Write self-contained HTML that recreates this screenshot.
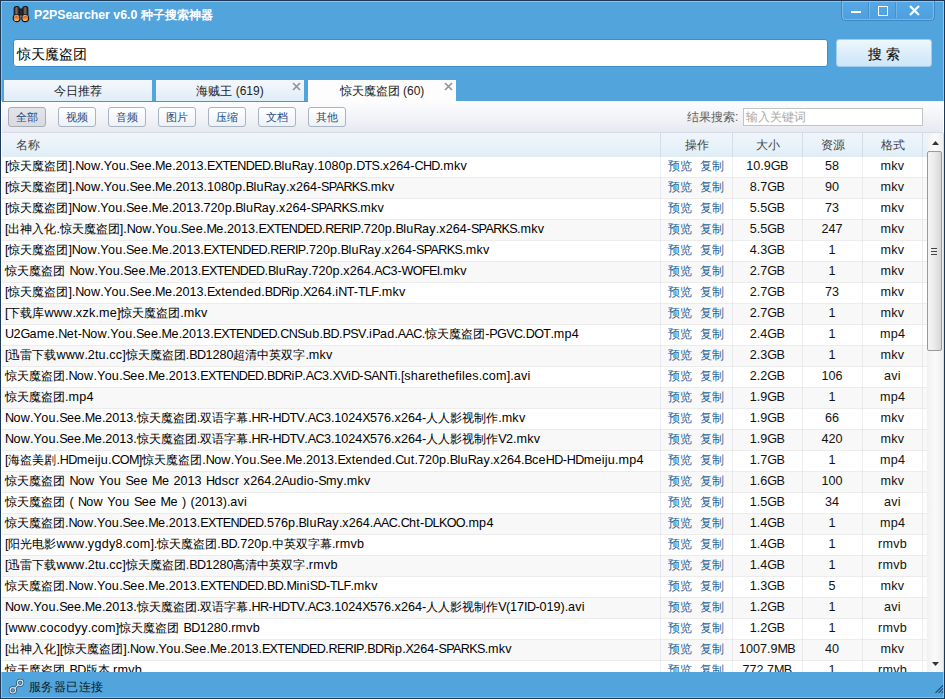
<!DOCTYPE html>
<html><head><meta charset="utf-8">
<style>
*{box-sizing:border-box;margin:0;padding:0}
html,body{width:945px;height:699px;overflow:hidden;background:#52a4dc;font-family:"Liberation Sans",sans-serif;font-size:12px;color:#111}
.abs{position:absolute}
#win{position:absolute;left:0;top:0;width:945px;height:699px;background:#52a4dc;border:1px solid #1c3a58;}
#inner{position:absolute;left:0;top:0;width:943px;height:100px;border:1px solid #8cc6f0;border-bottom:none}
#title{position:absolute;left:34px;top:7px;color:#fff;font-weight:bold;font-size:12.3px;line-height:16px;letter-spacing:0}
#ctrl{position:absolute;left:841px;top:0;width:94px;height:21px;border:1px solid #3f88c4;border-top:none;border-radius:0 0 5px 5px;background:linear-gradient(#58a8e6,#4e9fdd);box-shadow:inset 1px 0 0 rgba(255,255,255,.25),inset -1px 0 0 rgba(255,255,255,.25),inset 0 -1px 0 rgba(255,255,255,.25)}
#ctrl .sep{position:absolute;top:1px;bottom:2px;width:1px;background:#4690cc;box-shadow:1px 0 0 rgba(255,255,255,.2)}
#search{position:absolute;left:13px;top:39px;width:815px;height:28px;background:#fff;border-radius:3px;border:1px solid #3d8ccc;font-size:14px;line-height:29px;padding-left:3px;color:#000}
#sbtn{position:absolute;left:836px;top:39px;width:96px;height:28px;border-radius:3px;background:linear-gradient(#eef7fd,#d8ecfa 60%,#cfe6f8);border:1px solid #9fcdf0;font-size:14px;line-height:28px;text-align:center;color:#111;letter-spacing:0;-webkit-text-stroke:0.12px #111}
.tab{position:absolute;top:80px;height:21px;width:148px;background:linear-gradient(#f4f8fc,#e4eef8 85%,#dcf2fc);text-align:center;line-height:22.5px;font-size:12px;color:#222}
.tab.act{background:#fdfdfd;height:22px}
.tab .x{position:absolute;right:3px;top:2px;width:9px;height:9px}
#panel{position:absolute;left:2px;top:101px;width:941px;height:571px;background:#fff}
#tool{position:absolute;left:0;top:0;width:941px;height:32px;background:linear-gradient(#fdfdfe,#f2f4f8 50%,#e6e9f0);border-bottom:1px solid #d6dbe4}
.fb{position:absolute;top:6px;width:38px;height:20px;border:1px solid #a9b4c2;border-radius:3px;background:linear-gradient(#ffffff,#edf1f6);color:#1f4a7c;font-size:10.5px;line-height:19.5px;text-align:center}
.fb.on{background:linear-gradient(#e2e4e8,#d8dbe0);border-color:#a4adb8}
#lbl{position:absolute;left:685px;top:7px;color:#606060;font-size:12px;line-height:18px}
#kw{position:absolute;left:741px;top:7px;width:180px;height:18px;border:1px solid #c3c3c3;background:#fff;color:#aaa;font-size:12px;line-height:16px;padding-left:2px}
#hdr{position:absolute;left:0;top:32px;width:925px;height:24px;background:linear-gradient(#f0f4fc,#e8f2f9 55%,#e0edf6);color:#444;font-size:12px;line-height:22px}
#hdr span{position:absolute;top:1px;text-align:center}
#hdr .vs{position:absolute;top:0;width:1px;height:24px;background:#d2dde8}
#rows{position:absolute;left:0;top:56px;width:925px;height:515px;overflow:hidden}
.r{position:absolute;left:0;width:925px;height:21px;background:#fff;border-bottom:1px solid #ececec;line-height:18px;font-size:12.6px;white-space:nowrap}
.r.alt{background:#f8f8f8}
.r span{position:absolute;top:0}
.r .n{left:3px;color:#000}
.r .op{left:666px;color:#2c6699;font-size:12px}
.r .op i{font-style:normal}
.r b{font-weight:normal;line-height:0}.r b.u{letter-spacing:-0.66px}.r b.l{letter-spacing:0.24px}.r b.d{letter-spacing:0}.r b.p{letter-spacing:-0.08px}.r b.c{font-size:12px}.r b.s{letter-spacing:0.88px}
.r .op .c2{margin-left:8px}
.r .sz{left:730px;width:70px;text-align:center}
.r .rs{left:800px;width:60px;text-align:center}
.r .fm{left:860.5px;width:60px;text-align:center}
.vl{position:absolute;top:0;width:1px;height:515px;background:rgba(200,205,215,.35)}
#sb{position:absolute;left:925px;top:32px;width:16px;height:539px;background:linear-gradient(90deg,#f0f0f0,#fafafa 50%,#eeeeee)}
#thumb{position:absolute;left:0px;top:18px;width:15px;height:200px;border:1px solid #999;border-radius:2px;background:linear-gradient(90deg,#f4f4f4,#ececec 45%,#d6d6d6)}
#status{position:absolute;left:1px;top:672px;width:943px;height:26px;background:#52a4dc;border-left:1px solid #8cc6f0;border-right:1px solid #8cc6f0;border-bottom:1px solid #7fbdea}
#stxt{position:absolute;left:27px;top:7.5px;font-size:12.3px;letter-spacing:0.45px;line-height:14px;color:#0a1828}
</style></head><body>
<div id="win">
<div id="inner"></div>
</div>
<!-- binoculars -->
<svg class="abs" style="left:12px;top:5px" width="18" height="18" viewBox="0 0 18 18">
<defs>
<linearGradient id="lg" x1="0" y1="0" x2="0" y2="1"><stop offset="0" stop-color="#c8401c"/><stop offset=".55" stop-color="#ee8a3a"/><stop offset="1" stop-color="#ffd080"/></linearGradient>
<linearGradient id="bg" x1="0" y1="0" x2="1" y2="0"><stop offset="0" stop-color="#3a302c"/><stop offset=".45" stop-color="#7a6a5e"/><stop offset="1" stop-color="#2e2622"/></linearGradient>
</defs>
<path d="M6 4H12V10H6Z" fill="#2a2a30" stroke="#101018" stroke-width="1"/>
<rect x="2.2" y="1.5" width="5" height="11" rx="2.2" fill="url(#bg)" stroke="#141418" stroke-width="1.1"/>
<rect x="10.8" y="1.5" width="5" height="11" rx="2.2" fill="url(#bg)" stroke="#141418" stroke-width="1.1"/>
<circle cx="4.6" cy="13.2" r="3.4" fill="url(#lg)" stroke="#121216" stroke-width="1.1"/>
<circle cx="13.2" cy="13.2" r="3.4" fill="url(#lg)" stroke="#121216" stroke-width="1.1"/>
<path d="M2 11.2Q4.6 9.6 7.2 11.2M10.6 11.2Q13.2 9.6 15.8 11.2" stroke="#e8e0d0" stroke-width=".8" fill="none"/>
</svg>
<div id="title">P2PSearcher v6.0 <span style="font-size:12px">种子搜索神器</span></div>
<div id="ctrl">
<div class="sep" style="left:26px"></div>
<div class="sep" style="left:53px"></div>
<div class="abs" style="left:0;top:1px;width:92px;height:1px;background:#8cc6f0"></div>
<div class="abs" style="left:9px;top:11px;width:10px;height:2px;background:#fff"></div>
<div class="abs" style="left:36px;top:6px;width:10px;height:10px;border:1.7px solid #fff"></div>
<svg class="abs" style="left:67px;top:5px" width="11" height="11" viewBox="0 0 11 11"><path d="M1 1L10 10M10 1L1 10" stroke="#fff" stroke-width="2.2"/></svg>
</div>
<div class="abs" style="left:0;top:0;width:945px;height:1px;background:#1c3a58"></div>
<div id="search">惊天魔盗团</div>
<div id="sbtn">搜 索</div>
<div class="tab" style="left:4px">今日推荐</div>
<div class="tab" style="left:156px">海贼王 (619)<svg class="x" viewBox="0 0 9 9"><path d="M1 1L8 8M8 1L1 8" stroke="#8a939c" stroke-width="1.6"/></svg></div>
<div class="tab act" style="left:308px">惊天魔盗团 (60)<svg class="x" viewBox="0 0 9 9"><path d="M1 1L8 8M8 1L1 8" stroke="#8a939c" stroke-width="1.6"/></svg></div>
<div class="abs" style="left:2px;top:101px;width:306px;height:1px;background:#5c8fb3;z-index:5"></div>
<div class="abs" style="left:1px;top:101px;width:943px;height:571px;background:#fff"></div>
<div id="panel">
<div id="tool">
<div class="fb on" style="left:6px">全部</div>
<div class="fb" style="left:56px">视频</div>
<div class="fb" style="left:106px">音频</div>
<div class="fb" style="left:156px">图片</div>
<div class="fb" style="left:206px">压缩</div>
<div class="fb" style="left:256px">文档</div>
<div class="fb" style="left:306px">其他</div>
<div id="lbl">结果搜索:</div>
<div id="kw">输入关键词</div>
</div>
<div id="hdr">
<span style="left:14px">名称</span>
<div class="vs" style="left:658px"></div>
<span style="left:659px;width:72px">操作</span>
<div class="vs" style="left:730px"></div>
<span style="left:731px;width:70px">大小</span>
<div class="vs" style="left:800px"></div>
<span style="left:801px;width:60px">资源</span>
<div class="vs" style="left:860px"></div>
<span style="left:861px;width:60px">格式</span>
<div class="vs" style="left:920px"></div>
</div>
<div id="rows">
<div class="r" style="top:0px"><span class="n"><b class="p">[</b><b class="c">惊天魔盗团</b><b class="p">].</b><b class="u">N</b><b class="l">ow</b><b class="p">.</b><b class="u">Y</b><b class="l">ou</b><b class="p">.</b><b class="u">S</b><b class="l">ee</b><b class="p">.</b><b class="u">M</b><b class="l">e</b><b class="p">.</b><b class="d">2013</b><b class="p">.</b><b class="u">EXTENDED</b><b class="p">.</b><b class="u">B</b><b class="l">lu</b><b class="u">R</b><b class="l">ay</b><b class="p">.</b><b class="d">1080</b><b class="l">p</b><b class="p">.</b><b class="u">DTS</b><b class="p">.</b><b class="l">x</b><b class="d">264</b><b class="p">-</b><b class="u">CHD</b><b class="p">.</b><b class="l">mkv</b></span><span class="op"><i>预览</i><i class="c2">复制</i></span><span class="sz"><b class="d">10</b><b class="p">.</b><b class="d">9</b><b class="u">GB</b></span><span class="rs"><b class="d">58</b></span><span class="fm"><b class="l">mkv</b></span></div>
<div class="r alt" style="top:21px"><span class="n"><b class="p">[</b><b class="c">惊天魔盗团</b><b class="p">].</b><b class="u">N</b><b class="l">ow</b><b class="p">.</b><b class="u">Y</b><b class="l">ou</b><b class="p">.</b><b class="u">S</b><b class="l">ee</b><b class="p">.</b><b class="u">M</b><b class="l">e</b><b class="p">.</b><b class="d">2013</b><b class="p">.</b><b class="d">1080</b><b class="l">p</b><b class="p">.</b><b class="u">B</b><b class="l">lu</b><b class="u">R</b><b class="l">ay</b><b class="p">.</b><b class="l">x</b><b class="d">264</b><b class="p">-</b><b class="u">SPARKS</b><b class="p">.</b><b class="l">mkv</b></span><span class="op"><i>预览</i><i class="c2">复制</i></span><span class="sz"><b class="d">8</b><b class="p">.</b><b class="d">7</b><b class="u">GB</b></span><span class="rs"><b class="d">90</b></span><span class="fm"><b class="l">mkv</b></span></div>
<div class="r" style="top:42px"><span class="n"><b class="p">[</b><b class="c">惊天魔盗团</b><b class="p">]</b><b class="u">N</b><b class="l">ow</b><b class="p">.</b><b class="u">Y</b><b class="l">ou</b><b class="p">.</b><b class="u">S</b><b class="l">ee</b><b class="p">.</b><b class="u">M</b><b class="l">e</b><b class="p">.</b><b class="d">2013</b><b class="p">.</b><b class="d">720</b><b class="l">p</b><b class="p">.</b><b class="u">B</b><b class="l">lu</b><b class="u">R</b><b class="l">ay</b><b class="p">.</b><b class="l">x</b><b class="d">264</b><b class="p">-</b><b class="u">SPARKS</b><b class="p">.</b><b class="l">mkv</b></span><span class="op"><i>预览</i><i class="c2">复制</i></span><span class="sz"><b class="d">5</b><b class="p">.</b><b class="d">5</b><b class="u">GB</b></span><span class="rs"><b class="d">73</b></span><span class="fm"><b class="l">mkv</b></span></div>
<div class="r alt" style="top:63px"><span class="n"><b class="p">[</b><b class="c">出神入化</b><b class="p">.</b><b class="c">惊天魔盗团</b><b class="p">].</b><b class="u">N</b><b class="l">ow</b><b class="p">.</b><b class="u">Y</b><b class="l">ou</b><b class="p">.</b><b class="u">S</b><b class="l">ee</b><b class="p">.</b><b class="u">M</b><b class="l">e</b><b class="p">.</b><b class="d">2013</b><b class="p">.</b><b class="u">EXTENDED</b><b class="p">.</b><b class="u">RERIP</b><b class="p">.</b><b class="d">720</b><b class="l">p</b><b class="p">.</b><b class="u">B</b><b class="l">lu</b><b class="u">R</b><b class="l">ay</b><b class="p">.</b><b class="l">x</b><b class="d">264</b><b class="p">-</b><b class="u">SPARKS</b><b class="p">.</b><b class="l">mkv</b></span><span class="op"><i>预览</i><i class="c2">复制</i></span><span class="sz"><b class="d">5</b><b class="p">.</b><b class="d">5</b><b class="u">GB</b></span><span class="rs"><b class="d">247</b></span><span class="fm"><b class="l">mkv</b></span></div>
<div class="r" style="top:84px"><span class="n"><b class="p">[</b><b class="c">惊天魔盗团</b><b class="p">]</b><b class="u">N</b><b class="l">ow</b><b class="p">.</b><b class="u">Y</b><b class="l">ou</b><b class="p">.</b><b class="u">S</b><b class="l">ee</b><b class="p">.</b><b class="u">M</b><b class="l">e</b><b class="p">.</b><b class="d">2013</b><b class="p">.</b><b class="u">EXTENDED</b><b class="p">.</b><b class="u">RERIP</b><b class="p">.</b><b class="d">720</b><b class="l">p</b><b class="p">.</b><b class="u">B</b><b class="l">lu</b><b class="u">R</b><b class="l">ay</b><b class="p">.</b><b class="l">x</b><b class="d">264</b><b class="p">-</b><b class="u">SPARKS</b><b class="p">.</b><b class="l">mkv</b></span><span class="op"><i>预览</i><i class="c2">复制</i></span><span class="sz"><b class="d">4</b><b class="p">.</b><b class="d">3</b><b class="u">GB</b></span><span class="rs"><b class="d">1</b></span><span class="fm"><b class="l">mkv</b></span></div>
<div class="r alt" style="top:105px"><span class="n"><b class="c">惊天魔盗团</b><b class="s"> </b><b class="u">N</b><b class="l">ow</b><b class="p">.</b><b class="u">Y</b><b class="l">ou</b><b class="p">.</b><b class="u">S</b><b class="l">ee</b><b class="p">.</b><b class="u">M</b><b class="l">e</b><b class="p">.</b><b class="d">2013</b><b class="p">.</b><b class="u">EXTENDED</b><b class="p">.</b><b class="u">B</b><b class="l">lu</b><b class="u">R</b><b class="l">ay</b><b class="p">.</b><b class="d">720</b><b class="l">p</b><b class="p">.</b><b class="l">x</b><b class="d">264</b><b class="p">.</b><b class="u">AC</b><b class="d">3</b><b class="p">-</b><b class="u">WOFEI</b><b class="p">.</b><b class="l">mkv</b></span><span class="op"><i>预览</i><i class="c2">复制</i></span><span class="sz"><b class="d">2</b><b class="p">.</b><b class="d">7</b><b class="u">GB</b></span><span class="rs"><b class="d">1</b></span><span class="fm"><b class="l">mkv</b></span></div>
<div class="r" style="top:126px"><span class="n"><b class="p">[</b><b class="c">惊天魔盗团</b><b class="p">].</b><b class="u">N</b><b class="l">ow</b><b class="p">.</b><b class="u">Y</b><b class="l">ou</b><b class="p">.</b><b class="u">S</b><b class="l">ee</b><b class="p">.</b><b class="u">M</b><b class="l">e</b><b class="p">.</b><b class="d">2013</b><b class="p">.</b><b class="u">E</b><b class="l">xtended</b><b class="p">.</b><b class="u">BDR</b><b class="l">ip</b><b class="p">.</b><b class="u">X</b><b class="d">264</b><b class="p">.</b><b class="l">i</b><b class="u">NT</b><b class="p">-</b><b class="u">TLF</b><b class="p">.</b><b class="l">mkv</b></span><span class="op"><i>预览</i><i class="c2">复制</i></span><span class="sz"><b class="d">2</b><b class="p">.</b><b class="d">7</b><b class="u">GB</b></span><span class="rs"><b class="d">73</b></span><span class="fm"><b class="l">mkv</b></span></div>
<div class="r alt" style="top:147px"><span class="n"><b class="p">[</b><b class="c">下载库</b><b class="l">www</b><b class="p">.</b><b class="l">xzk</b><b class="p">.</b><b class="l">me</b><b class="p">]</b><b class="c">惊天魔盗团</b><b class="p">.</b><b class="l">mkv</b></span><span class="op"><i>预览</i><i class="c2">复制</i></span><span class="sz"><b class="d">2</b><b class="p">.</b><b class="d">7</b><b class="u">GB</b></span><span class="rs"><b class="d">1</b></span><span class="fm"><b class="l">mkv</b></span></div>
<div class="r" style="top:168px"><span class="n"><b class="u">U</b><b class="d">2</b><b class="u">G</b><b class="l">ame</b><b class="p">.</b><b class="u">N</b><b class="l">et</b><b class="p">-</b><b class="u">N</b><b class="l">ow</b><b class="p">.</b><b class="u">Y</b><b class="l">ou</b><b class="p">.</b><b class="u">S</b><b class="l">ee</b><b class="p">.</b><b class="u">M</b><b class="l">e</b><b class="p">.</b><b class="d">2013</b><b class="p">.</b><b class="u">EXTENDED</b><b class="p">.</b><b class="u">CNS</b><b class="l">ub</b><b class="p">.</b><b class="u">BD</b><b class="p">.</b><b class="u">PSV</b><b class="p">.</b><b class="l">i</b><b class="u">P</b><b class="l">ad</b><b class="p">.</b><b class="u">AAC</b><b class="p">.</b><b class="c">惊天魔盗团</b><b class="p">-</b><b class="u">PGVC</b><b class="p">.</b><b class="u">DOT</b><b class="p">.</b><b class="l">mp</b><b class="d">4</b></span><span class="op"><i>预览</i><i class="c2">复制</i></span><span class="sz"><b class="d">2</b><b class="p">.</b><b class="d">4</b><b class="u">GB</b></span><span class="rs"><b class="d">1</b></span><span class="fm"><b class="l">mp</b><b class="d">4</b></span></div>
<div class="r alt" style="top:189px"><span class="n"><b class="p">[</b><b class="c">迅雷下载</b><b class="l">www</b><b class="p">.</b><b class="d">2</b><b class="l">tu</b><b class="p">.</b><b class="l">cc</b><b class="p">]</b><b class="c">惊天魔盗团</b><b class="p">.</b><b class="u">BD</b><b class="d">1280</b><b class="c">超清中英双字</b><b class="p">.</b><b class="l">mkv</b></span><span class="op"><i>预览</i><i class="c2">复制</i></span><span class="sz"><b class="d">2</b><b class="p">.</b><b class="d">3</b><b class="u">GB</b></span><span class="rs"><b class="d">1</b></span><span class="fm"><b class="l">mkv</b></span></div>
<div class="r" style="top:210px"><span class="n"><b class="c">惊天魔盗团</b><b class="p">.</b><b class="u">N</b><b class="l">ow</b><b class="p">.</b><b class="u">Y</b><b class="l">ou</b><b class="p">.</b><b class="u">S</b><b class="l">ee</b><b class="p">.</b><b class="u">M</b><b class="l">e</b><b class="p">.</b><b class="d">2013</b><b class="p">.</b><b class="u">EXTENDED</b><b class="p">.</b><b class="u">BDR</b><b class="l">i</b><b class="u">P</b><b class="p">.</b><b class="u">AC</b><b class="d">3</b><b class="p">.</b><b class="u">XV</b><b class="l">i</b><b class="u">D</b><b class="p">-</b><b class="u">SANT</b><b class="l">i</b><b class="p">.[</b><b class="l">sharethefiles</b><b class="p">.</b><b class="l">com</b><b class="p">].</b><b class="l">avi</b></span><span class="op"><i>预览</i><i class="c2">复制</i></span><span class="sz"><b class="d">2</b><b class="p">.</b><b class="d">2</b><b class="u">GB</b></span><span class="rs"><b class="d">106</b></span><span class="fm"><b class="l">avi</b></span></div>
<div class="r alt" style="top:231px"><span class="n"><b class="c">惊天魔盗团</b><b class="p">.</b><b class="l">mp</b><b class="d">4</b></span><span class="op"><i>预览</i><i class="c2">复制</i></span><span class="sz"><b class="d">1</b><b class="p">.</b><b class="d">9</b><b class="u">GB</b></span><span class="rs"><b class="d">1</b></span><span class="fm"><b class="l">mp</b><b class="d">4</b></span></div>
<div class="r" style="top:252px"><span class="n"><b class="u">N</b><b class="l">ow</b><b class="p">.</b><b class="u">Y</b><b class="l">ou</b><b class="p">.</b><b class="u">S</b><b class="l">ee</b><b class="p">.</b><b class="u">M</b><b class="l">e</b><b class="p">.</b><b class="d">2013</b><b class="p">.</b><b class="c">惊天魔盗团</b><b class="p">.</b><b class="c">双语字幕</b><b class="p">.</b><b class="u">HR</b><b class="p">-</b><b class="u">HDTV</b><b class="p">.</b><b class="u">AC</b><b class="d">3</b><b class="p">.</b><b class="d">1024</b><b class="u">X</b><b class="d">576</b><b class="p">.</b><b class="l">x</b><b class="d">264</b><b class="p">-</b><b class="c">人人影视制作</b><b class="p">.</b><b class="l">mkv</b></span><span class="op"><i>预览</i><i class="c2">复制</i></span><span class="sz"><b class="d">1</b><b class="p">.</b><b class="d">9</b><b class="u">GB</b></span><span class="rs"><b class="d">66</b></span><span class="fm"><b class="l">mkv</b></span></div>
<div class="r alt" style="top:273px"><span class="n"><b class="u">N</b><b class="l">ow</b><b class="p">.</b><b class="u">Y</b><b class="l">ou</b><b class="p">.</b><b class="u">S</b><b class="l">ee</b><b class="p">.</b><b class="u">M</b><b class="l">e</b><b class="p">.</b><b class="d">2013</b><b class="p">.</b><b class="c">惊天魔盗团</b><b class="p">.</b><b class="c">双语字幕</b><b class="p">.</b><b class="u">HR</b><b class="p">-</b><b class="u">HDTV</b><b class="p">.</b><b class="u">AC</b><b class="d">3</b><b class="p">.</b><b class="d">1024</b><b class="u">X</b><b class="d">576</b><b class="p">.</b><b class="l">x</b><b class="d">264</b><b class="p">-</b><b class="c">人人影视制作</b><b class="u">V</b><b class="d">2</b><b class="p">.</b><b class="l">mkv</b></span><span class="op"><i>预览</i><i class="c2">复制</i></span><span class="sz"><b class="d">1</b><b class="p">.</b><b class="d">9</b><b class="u">GB</b></span><span class="rs"><b class="d">420</b></span><span class="fm"><b class="l">mkv</b></span></div>
<div class="r" style="top:294px"><span class="n"><b class="p">[</b><b class="c">海盗美剧</b><b class="p">.</b><b class="u">HD</b><b class="l">meiju</b><b class="p">.</b><b class="u">COM</b><b class="p">]</b><b class="c">惊天魔盗团</b><b class="p">.</b><b class="u">N</b><b class="l">ow</b><b class="p">.</b><b class="u">Y</b><b class="l">ou</b><b class="p">.</b><b class="u">S</b><b class="l">ee</b><b class="p">.</b><b class="u">M</b><b class="l">e</b><b class="p">.</b><b class="d">2013</b><b class="p">.</b><b class="u">E</b><b class="l">xtended</b><b class="p">.</b><b class="u">C</b><b class="l">ut</b><b class="p">.</b><b class="d">720</b><b class="l">p</b><b class="p">.</b><b class="u">B</b><b class="l">lu</b><b class="u">R</b><b class="l">ay</b><b class="p">.</b><b class="l">x</b><b class="d">264</b><b class="p">.</b><b class="u">B</b><b class="l">ce</b><b class="u">HD</b><b class="p">-</b><b class="u">HD</b><b class="l">meiju</b><b class="p">.</b><b class="l">mp</b><b class="d">4</b></span><span class="op"><i>预览</i><i class="c2">复制</i></span><span class="sz"><b class="d">1</b><b class="p">.</b><b class="d">7</b><b class="u">GB</b></span><span class="rs"><b class="d">1</b></span><span class="fm"><b class="l">mp</b><b class="d">4</b></span></div>
<div class="r alt" style="top:315px"><span class="n"><b class="c">惊天魔盗团</b><b class="s"> </b><b class="u">N</b><b class="l">ow</b><b class="s"> </b><b class="u">Y</b><b class="l">ou</b><b class="s"> </b><b class="u">S</b><b class="l">ee</b><b class="s"> </b><b class="u">M</b><b class="l">e</b><b class="s"> </b><b class="d">2013</b><b class="s"> </b><b class="u">H</b><b class="l">dscr</b><b class="s"> </b><b class="l">x</b><b class="d">264</b><b class="p">.</b><b class="d">2</b><b class="u">A</b><b class="l">udio</b><b class="p">-</b><b class="u">S</b><b class="l">my</b><b class="p">.</b><b class="l">mkv</b></span><span class="op"><i>预览</i><i class="c2">复制</i></span><span class="sz"><b class="d">1</b><b class="p">.</b><b class="d">6</b><b class="u">GB</b></span><span class="rs"><b class="d">100</b></span><span class="fm"><b class="l">mkv</b></span></div>
<div class="r" style="top:336px"><span class="n"><b class="c">惊天魔盗团</b><b class="s"> </b><b class="p">(</b><b class="s"> </b><b class="u">N</b><b class="l">ow</b><b class="s"> </b><b class="u">Y</b><b class="l">ou</b><b class="s"> </b><b class="u">S</b><b class="l">ee</b><b class="s"> </b><b class="u">M</b><b class="l">e</b><b class="s"> </b><b class="p">)</b><b class="s"> </b><b class="p">(</b><b class="d">2013</b><b class="p">).</b><b class="l">avi</b></span><span class="op"><i>预览</i><i class="c2">复制</i></span><span class="sz"><b class="d">1</b><b class="p">.</b><b class="d">5</b><b class="u">GB</b></span><span class="rs"><b class="d">34</b></span><span class="fm"><b class="l">avi</b></span></div>
<div class="r alt" style="top:357px"><span class="n"><b class="c">惊天魔盗团</b><b class="p">.</b><b class="u">N</b><b class="l">ow</b><b class="p">.</b><b class="u">Y</b><b class="l">ou</b><b class="p">.</b><b class="u">S</b><b class="l">ee</b><b class="p">.</b><b class="u">M</b><b class="l">e</b><b class="p">.</b><b class="d">2013</b><b class="p">.</b><b class="u">EXTENDED</b><b class="p">.</b><b class="d">576</b><b class="l">p</b><b class="p">.</b><b class="u">B</b><b class="l">lu</b><b class="u">R</b><b class="l">ay</b><b class="p">.</b><b class="l">x</b><b class="d">264</b><b class="p">.</b><b class="u">AAC</b><b class="p">.</b><b class="u">C</b><b class="l">ht</b><b class="p">-</b><b class="u">DLKOO</b><b class="p">.</b><b class="l">mp</b><b class="d">4</b></span><span class="op"><i>预览</i><i class="c2">复制</i></span><span class="sz"><b class="d">1</b><b class="p">.</b><b class="d">4</b><b class="u">GB</b></span><span class="rs"><b class="d">1</b></span><span class="fm"><b class="l">mp</b><b class="d">4</b></span></div>
<div class="r" style="top:378px"><span class="n"><b class="p">[</b><b class="c">阳光电影</b><b class="l">www</b><b class="p">.</b><b class="l">ygdy</b><b class="d">8</b><b class="p">.</b><b class="l">com</b><b class="p">].</b><b class="c">惊天魔盗团</b><b class="p">.</b><b class="u">BD</b><b class="p">.</b><b class="d">720</b><b class="l">p</b><b class="p">.</b><b class="c">中英双字幕</b><b class="p">.</b><b class="l">rmvb</b></span><span class="op"><i>预览</i><i class="c2">复制</i></span><span class="sz"><b class="d">1</b><b class="p">.</b><b class="d">4</b><b class="u">GB</b></span><span class="rs"><b class="d">1</b></span><span class="fm"><b class="l">rmvb</b></span></div>
<div class="r alt" style="top:399px"><span class="n"><b class="p">[</b><b class="c">迅雷下载</b><b class="l">www</b><b class="p">.</b><b class="d">2</b><b class="l">tu</b><b class="p">.</b><b class="l">cc</b><b class="p">]</b><b class="c">惊天魔盗团</b><b class="p">.</b><b class="u">BD</b><b class="d">1280</b><b class="c">高清中英双字</b><b class="p">.</b><b class="l">rmvb</b></span><span class="op"><i>预览</i><i class="c2">复制</i></span><span class="sz"><b class="d">1</b><b class="p">.</b><b class="d">4</b><b class="u">GB</b></span><span class="rs"><b class="d">1</b></span><span class="fm"><b class="l">rmvb</b></span></div>
<div class="r" style="top:420px"><span class="n"><b class="c">惊天魔盗团</b><b class="p">.</b><b class="u">N</b><b class="l">ow</b><b class="p">.</b><b class="u">Y</b><b class="l">ou</b><b class="p">.</b><b class="u">S</b><b class="l">ee</b><b class="p">.</b><b class="u">M</b><b class="l">e</b><b class="p">.</b><b class="d">2013</b><b class="p">.</b><b class="u">EXTENDED</b><b class="p">.</b><b class="u">BD</b><b class="p">.</b><b class="u">M</b><b class="l">ini</b><b class="u">SD</b><b class="p">-</b><b class="u">TLF</b><b class="p">.</b><b class="l">mkv</b></span><span class="op"><i>预览</i><i class="c2">复制</i></span><span class="sz"><b class="d">1</b><b class="p">.</b><b class="d">3</b><b class="u">GB</b></span><span class="rs"><b class="d">5</b></span><span class="fm"><b class="l">mkv</b></span></div>
<div class="r alt" style="top:441px"><span class="n"><b class="u">N</b><b class="l">ow</b><b class="p">.</b><b class="u">Y</b><b class="l">ou</b><b class="p">.</b><b class="u">S</b><b class="l">ee</b><b class="p">.</b><b class="u">M</b><b class="l">e</b><b class="p">.</b><b class="d">2013</b><b class="p">.</b><b class="c">惊天魔盗团</b><b class="p">.</b><b class="c">双语字幕</b><b class="p">.</b><b class="u">HR</b><b class="p">-</b><b class="u">HDTV</b><b class="p">.</b><b class="u">AC</b><b class="d">3</b><b class="p">.</b><b class="d">1024</b><b class="u">X</b><b class="d">576</b><b class="p">.</b><b class="l">x</b><b class="d">264</b><b class="p">-</b><b class="c">人人影视制作</b><b class="u">V</b><b class="p">(</b><b class="d">17</b><b class="u">ID</b><b class="p">-</b><b class="d">019</b><b class="p">).</b><b class="l">avi</b></span><span class="op"><i>预览</i><i class="c2">复制</i></span><span class="sz"><b class="d">1</b><b class="p">.</b><b class="d">2</b><b class="u">GB</b></span><span class="rs"><b class="d">1</b></span><span class="fm"><b class="l">avi</b></span></div>
<div class="r" style="top:462px"><span class="n"><b class="p">[</b><b class="l">www</b><b class="p">.</b><b class="l">cocodyy</b><b class="p">.</b><b class="l">com</b><b class="p">]</b><b class="c">惊天魔盗团</b><b class="s"> </b><b class="u">BD</b><b class="d">1280</b><b class="p">.</b><b class="l">rmvb</b></span><span class="op"><i>预览</i><i class="c2">复制</i></span><span class="sz"><b class="d">1</b><b class="p">.</b><b class="d">2</b><b class="u">GB</b></span><span class="rs"><b class="d">1</b></span><span class="fm"><b class="l">rmvb</b></span></div>
<div class="r alt" style="top:483px"><span class="n"><b class="p">[</b><b class="c">出神入化</b><b class="p">][</b><b class="c">惊天魔盗团</b><b class="p">].</b><b class="u">N</b><b class="l">ow</b><b class="p">.</b><b class="u">Y</b><b class="l">ou</b><b class="p">.</b><b class="u">S</b><b class="l">ee</b><b class="p">.</b><b class="u">M</b><b class="l">e</b><b class="p">.</b><b class="d">2013</b><b class="p">.</b><b class="u">EXTENDED</b><b class="p">.</b><b class="u">RERIP</b><b class="p">.</b><b class="u">BDR</b><b class="l">ip</b><b class="p">.</b><b class="u">X</b><b class="d">264</b><b class="p">-</b><b class="u">SPARKS</b><b class="p">.</b><b class="l">mkv</b></span><span class="op"><i>预览</i><i class="c2">复制</i></span><span class="sz"><b class="d">1007</b><b class="p">.</b><b class="d">9</b><b class="u">MB</b></span><span class="rs"><b class="d">40</b></span><span class="fm"><b class="l">mkv</b></span></div>
<div class="r" style="top:504px"><span class="n"><b class="c">惊天魔盗团</b><b class="s"> </b><b class="u">BD</b><b class="c">版本</b><b class="p">.</b><b class="l">rmvb</b></span><span class="op"><i>预览</i><i class="c2">复制</i></span><span class="sz"><b class="d">772</b><b class="p">.</b><b class="d">7</b><b class="u">MB</b></span><span class="rs"><b class="d">1</b></span><span class="fm"><b class="l">rmvb</b></span></div>
<div class="vl" style="left:658px"></div>
<div class="vl" style="left:730px"></div>
<div class="vl" style="left:800px"></div>
<div class="vl" style="left:860px"></div>
<div class="vl" style="left:920px"></div>
</div>
<div id="sb">
<svg class="abs" style="left:5px;top:8px" width="7" height="4" viewBox="0 0 7 4"><path d="M0 4L3.5 0L7 4Z" fill="#333"/></svg>
<div id="thumb">
<div class="abs" style="left:3px;top:96px;width:6px;height:1px;background:#444"></div>
<div class="abs" style="left:3px;top:99px;width:6px;height:1px;background:#444"></div>
<div class="abs" style="left:3px;top:102px;width:6px;height:1px;background:#444"></div>
</div>
<svg class="abs" style="left:5px;top:529px" width="7" height="4" viewBox="0 0 7 4"><path d="M0 0L7 0L3.5 4Z" fill="#333"/></svg>
</div>
</div>
<div class="abs" style="left:943px;top:133px;width:1px;height:539px;background:#c4e2f6"></div>
<div id="status">
<svg class="abs" style="left:5px;top:5px" width="18" height="18" viewBox="0 0 18 18">
<g fill="none" stroke="#24384a" stroke-width="2.6" opacity=".75"><circle cx="13.2" cy="5.8" r="2.7"/><circle cx="5.8" cy="13.3" r="2.7"/><path d="M11.3 7.7L7.7 11.4"/></g>
<g fill="none" stroke="#dfe6ec" stroke-width="1.1"><circle cx="13.2" cy="5.8" r="2.7"/><circle cx="5.8" cy="13.3" r="2.7"/><path d="M11.3 7.7L7.7 11.4"/></g>
</svg>
<div id="stxt">服务器已连接</div>
<svg class="abs" style="left:932px;top:12px" width="10" height="10" viewBox="0 0 10 10">
<path d="M2 9.5L9.5 2M5 9.5L9.5 5M8 9.5L9.5 8" stroke="#8fcaf2" stroke-width="1"/>
<path d="M1.5 9L9 1.5M4.5 9L9 4.5M7.5 9L9 7.5" stroke="#1d4f7e" stroke-width="1.2"/>
</svg>
</div>
</body></html>
